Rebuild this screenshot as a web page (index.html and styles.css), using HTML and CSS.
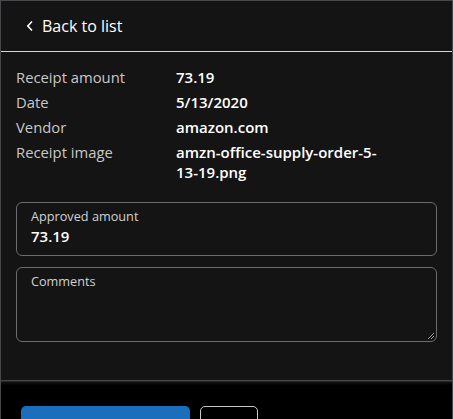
FILE: index.html
```html
<!DOCTYPE html>
<html>
<head>
<meta charset="utf-8">
<link rel="stylesheet" href="styles.css">
</head>
<body>
<div class="frame">
  <div class="panel">
    <header class="header">
      <button class="back">
        <svg class="chev" width="8" height="12" viewBox="0 0 8 12"><path d="M6 1.5 L1.8 6 L6 10.5" fill="none" stroke="#ffffff" stroke-width="1.6"/></svg>
        <span>Back to list</span>
      </button>
    </header>
    <dl class="details">
      <dt>Receipt amount</dt><dd>73.19</dd>
      <dt>Date</dt><dd>5/13/2020</dd>
      <dt>Vendor</dt><dd>amazon.com</dd>
      <dt>Receipt image</dt><dd>amzn-office-supply-order-5-<br>13-19.png</dd>
    </dl>
    <div class="field">
      <label class="flabel">Approved amount</label>
      <div class="fvalue">73.19</div>
    </div>
    <div class="field area">
      <label class="flabel">Comments</label>
      <svg class="grip" width="8" height="8" viewBox="0 0 8 8"><path d="M7 1 L1 7 M7 4 L4 7" stroke="#9a9a9a" stroke-width="1"/></svg>
    </div>
  </div>
  <div class="shadow"></div>
  <footer class="footer">
    <div class="btn primary"></div>
    <div class="btn secondary"></div>
  </footer>
</div>
</body>
</html>
```

FILE: styles.css
```css
html, body {
  margin: 0;
  padding: 0;
  background: #000;
  height: 419px;
  overflow: hidden;
}
body {
  font-family: "Open Sans", "Noto Sans", sans-serif;
  color: #fff;
}
.frame {
  height: 419px;
  border: 1px solid #46484b;
  border-bottom: none;
  box-sizing: border-box;
  display: flex;
  flex-direction: column;
  background: #000;
  overflow: hidden;
}
.panel {
  background: #141414;
  height: 379px;
  display: flex;
  flex-direction: column;
  flex: none;
}
.header {
  height: 50px;
  border-bottom: 1px solid #d6d6d6;
  display: flex;
  align-items: center;
  flex: none;
}
.back {
  background: none;
  border: none;
  color: #fff;
  font-family: inherit;
  font-size: 16px;
  display: flex;
  align-items: center;
  gap: 8px;
  padding: 0 0 0 25px;
  margin-top: -1px;
}
.chev { display: block; }
.details {
  margin: 15px 0 0 15px;
  display: grid;
  grid-template-columns: 160px 1fr;
  row-gap: 5px;
  font-size: 14.8px;
  line-height: 20px;
}
.details dt {
  color: #c8c8c8;
  margin: 0;
}
.details dd {
  margin: 0;
  color: #fff;
  font-weight: 600;
  font-size: 15px;
}
.field {
  margin: 20px 15px 0 15px;
  height: 54px;
  border: 1px solid #6a6c70;
  border-radius: 6px;
  box-sizing: border-box;
  padding: 5px 14px 0 14px;
  position: relative;
}
.field.area {
  margin-top: 11px;
  height: 75px;
}
.flabel {
  display: block;
  font-size: 12.7px;
  line-height: 16px;
  color: #d2d2d2;
}
.fvalue {
  font-size: 15px;
  line-height: 24px;
  font-weight: 600;
  color: #fff;
}
.grip {
  position: absolute;
  right: 1px;
  bottom: 1px;
}
.shadow {
  height: 5px;
  flex: none;
  background: linear-gradient(#5a5a5a, #141414 40%, #000);
}
.footer {
  flex: 1;
  background: #000;
  display: flex;
  gap: 10px;
  padding: 21px 0 0 20px;
  overflow: hidden;
}
.btn {
  height: 40px;
  border-radius: 5px;
  box-sizing: border-box;
  flex: none;
}
.primary {
  width: 169px;
  background: #1b6ebb;
}
.secondary {
  width: 58px;
  border: 1px solid #c8c8c8;
}
```
